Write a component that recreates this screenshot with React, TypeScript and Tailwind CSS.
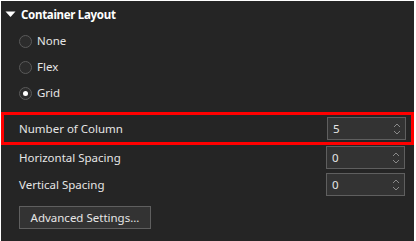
import React, { useState } from 'react';

const font = { fontFamily: '"Noto Sans", "Open Sans", sans-serif' };

function Radio({ label, checked, onSelect }: { label: string; checked: boolean; onSelect: () => void }) {
  return (
    <div className="flex h-[26px] items-center pl-[18px] cursor-pointer" onClick={onSelect}>
      <span className="flex h-[13px] w-[13px] items-center justify-center rounded-full border border-[#5a5a5a] bg-[#2c2c2c]">
        {checked && <span className="h-[5px] w-[5px] rounded-full bg-white" />}
      </span>
      <span className="ml-[5px] text-[11.5px] text-[#e6e6e6]">{label}</span>
    </div>
  );
}

function SpinBox({ value }: { value: string }) {
  return (
    <div className="flex h-[23px] w-[79px] items-center justify-between border border-[#5f5f5f] bg-[#333333] pl-[5px] pr-[4px]">
      <span className="text-[11.5px] text-[#e6e6e6]">{value}</span>
      <svg width="8" height="14" viewBox="0 0 8 14" fill="none" stroke="#8a8a8a" strokeWidth="1">
        <path d="M1 5 L4 2 L7 5" />
        <path d="M1 9 L4 12 L7 9" />
      </svg>
    </div>
  );
}

export default function App() {
  const [layout, setLayout] = useState('Grid');

  return (
    <div className="h-[241px] w-[416px] bg-white pl-px pt-px pr-[2px]" style={font}>
      <div className="h-full w-full bg-[#252525]">
        {/* Header */}
        <div className="flex h-[27px] items-center pl-[4px]">
          <svg width="11" height="7" viewBox="0 0 11 7">
            <path d="M0.5 0.5 L10.5 0.5 L5.5 6 Z" fill="#ffffff" />
          </svg>
          <span className="ml-[5px] text-[11.5px] font-bold tracking-[-0.3px] text-white">Container Layout</span>
        </div>

        {/* Layout options */}
        {['None', 'Flex', 'Grid'].map((opt) => (
          <Radio key={opt} label={opt} checked={layout === opt} onSelect={() => setLayout(opt)} />
        ))}

        {/* Highlighted row */}
        <div className="mt-[6px] flex h-[33px] items-center justify-between border-[3px] border-[#ff0000] pl-[15px] pr-[5px]">
          <span className="text-[11.5px] text-[#e6e6e6]">Number of Column</span>
          <SpinBox value="5" />
        </div>

        <div className="mt-px flex h-[23px] items-center justify-between pl-[18px] pr-[9px]">
          <span className="text-[11.5px] text-[#e6e6e6]">Horizontal Spacing</span>
          <SpinBox value="0" />
        </div>

        <div className="mt-[4px] flex h-[23px] items-center justify-between pl-[18px] pr-[9px]">
          <span className="text-[11.5px] text-[#e6e6e6]">Vertical Spacing</span>
          <SpinBox value="0" />
        </div>

        <div className="mt-[10px] pl-[18px]">
          <button className="flex h-[23px] w-[132px] items-center justify-center border border-[#5f5f5f] bg-[#333333] text-[11.5px] text-[#e6e6e6]">
            Advanced Settings...
          </button>
        </div>
      </div>
    </div>
  );
}
